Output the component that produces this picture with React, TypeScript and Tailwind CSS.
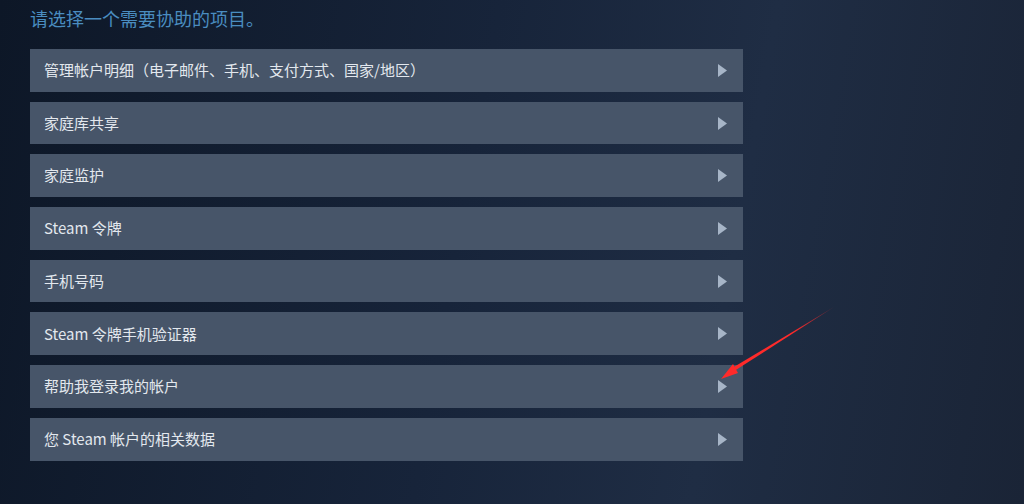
import React from "react";

const items = [
  "管理帐户明细（电子邮件、手机、支付方式、国家/地区）",
  "家庭库共享",
  "家庭监护",
  "Steam 令牌",
  "手机号码",
  "Steam 令牌手机验证器",
  "帮助我登录我的帐户",
  "您 Steam 帐户的相关数据",
];

export default function App() {
  return (
    <div
      className="relative w-[1024px] h-[504px] overflow-hidden bg-[linear-gradient(100deg,#0d1727_0%,#17243a_45%,#1f2d44_70%,#1a2436_100%)]"
      style={{ fontFamily: '"Noto Sans CJK SC", "Noto Sans", sans-serif' }}
    >
      <div className="pl-[30px] pt-[5px] w-[743px]">
        <div className="text-[18px] leading-[27px] text-[#4a8dc0]">请选择一个需要协助的项目。</div>
        <div className="mt-[17px] flex flex-col gap-[10px]">
          {items.map((t) => (
            <div
              key={t}
              className="h-[42.7px] bg-[#475569] flex items-center justify-between pl-[14px] pr-[16px] text-[15px] text-[#e3e8ee]"
            >
              <span>{t}</span>
              <svg width="9" height="13" viewBox="0 0 9 13">
                <polygon points="0,0 9,6.5 0,13" fill="#a7b5c7" />
              </svg>
            </div>
          ))}
        </div>
      </div>
      <svg className="absolute left-0 top-0" width="1024" height="504" viewBox="0 0 1024 504">
        <defs>
          <linearGradient id="ag" x1="834" y1="307" x2="730" y2="373" gradientUnits="userSpaceOnUse">
            <stop offset="0" stopColor="#ff2a2a" stopOpacity="0.3" />
            <stop offset="0.4" stopColor="#ff2a2a" />
            <stop offset="1" stopColor="#ff2a2a" />
          </linearGradient>
        </defs>
        <polygon points="834,307 735,370.5 733,367.5" fill="url(#ag)" />
        <polygon points="721,379 733,364 738,373" fill="#ff2a2a" />
      </svg>
    </div>
  );
}
